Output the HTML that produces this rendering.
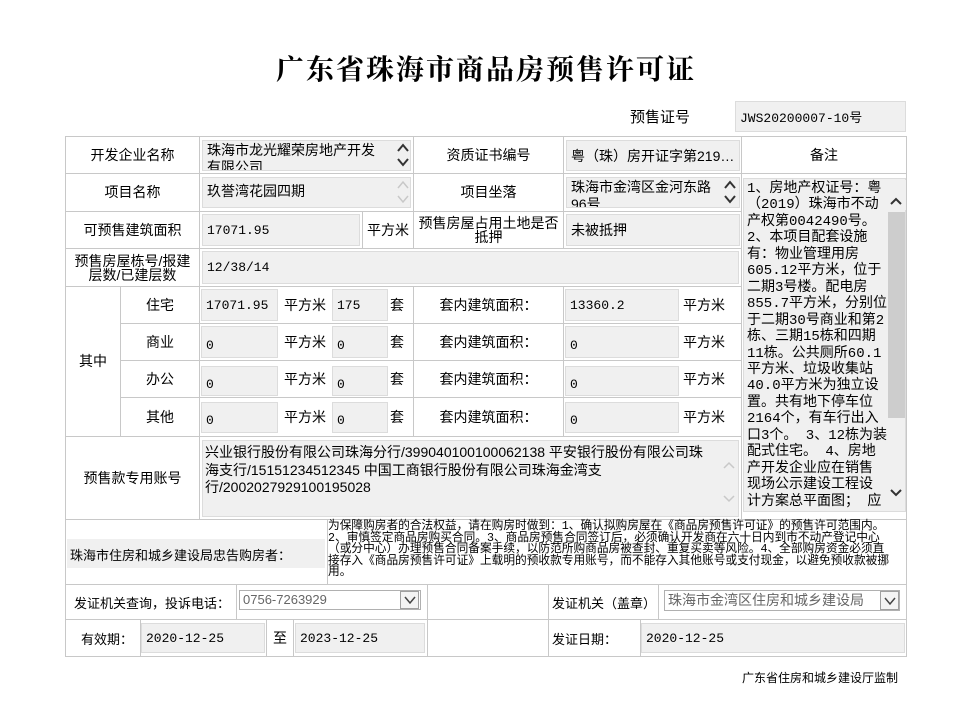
<!DOCTYPE html>
<html><head><meta charset="utf-8">
<style>
*{margin:0;padding:0;box-sizing:border-box}
body{width:957px;height:710px;background:#fff;position:relative;overflow:hidden;font-family:"Liberation Sans","Noto Sans CJK SC",sans-serif;color:#000}
.a{position:absolute}
.c{position:absolute;border:1px solid #c8c8c8;font-size:14px;display:flex;align-items:center;justify-content:center;text-align:center;line-height:15px}
.i{position:absolute;background:#f0f0f0;border:1px solid #dcdcdc;font-family:"Liberation Mono","Noto Sans CJK SC",monospace;font-size:13px;color:#000;display:flex;align-items:center;padding-left:4px;white-space:nowrap;overflow:hidden}
.t{position:absolute;font-size:14px;white-space:nowrap}
svg.s{position:absolute}
</style></head><body>
<div class="a" style="left:0;width:972px;top:48px;text-align:center;font-family:'Noto Serif CJK SC','Liberation Serif',serif;font-weight:bold;font-size:28px;letter-spacing:2px">广东省珠海市商品房预售许可证</div>
<div class="t" style="left:630px;top:106px;font-size:15px">预售证号</div>
<div class="i" style="left:735px;top:101px;width:171px;height:31px">JWS20200007-10号</div>

<div class="c" style="left:65px;top:136px;width:135px;height:38px">开发企业名称</div>
<div class="c" style="left:199px;top:136px;width:215px;height:38px"></div>
<div class="i" style="left:202px;top:140px;width:209px;height:31px;align-items:flex-start;font-family:'Liberation Sans','Noto Sans CJK SC',sans-serif;font-size:14px;line-height:17px;padding-top:1px">珠海市龙光耀荣房地产开发<br>有限公司</div>
<svg class="s" style="left:396px;top:141px" width="14" height="28" viewBox="0 0 14 28"><polyline points="2,10 7,4 12,10" fill="none" stroke="#333" stroke-width="2"/><polyline points="2,18 7,24 12,18" fill="none" stroke="#333" stroke-width="2"/></svg>
<div class="c" style="left:413px;top:136px;width:151px;height:38px">资质证书编号</div>
<div class="c" style="left:563px;top:136px;width:179px;height:38px"></div>
<div class="i" style="left:566px;top:140px;width:174px;height:31px;font-family:'Liberation Sans','Noto Sans CJK SC',sans-serif;font-size:14px">粤（珠）房开证字第219…</div>
<div class="c" style="left:741px;top:136px;width:166px;height:38px">备注</div>

<div class="c" style="left:65px;top:173px;width:135px;height:39px">项目名称</div>
<div class="c" style="left:199px;top:173px;width:215px;height:39px"></div>
<div class="i" style="left:202px;top:177px;width:209px;height:31px;align-items:flex-start;font-family:'Liberation Sans','Noto Sans CJK SC',sans-serif;font-size:14px;padding-top:3px">玖誉湾花园四期</div>
<svg class="s" style="left:396px;top:178px" width="14" height="28" viewBox="0 0 14 28"><polyline points="2,10 7,4 12,10" fill="none" stroke="#c8c8c8" stroke-width="1.5"/><polyline points="2,18 7,24 12,18" fill="none" stroke="#c8c8c8" stroke-width="1.5"/></svg>
<div class="c" style="left:413px;top:173px;width:151px;height:39px">项目坐落</div>
<div class="c" style="left:563px;top:173px;width:179px;height:39px"></div>
<div class="i" style="left:566px;top:177px;width:174px;height:31px;align-items:flex-start;font-family:'Liberation Sans','Noto Sans CJK SC',sans-serif;font-size:14px;line-height:17px;padding-top:1px">珠海市金湾区金河东路<br>96号</div>
<svg class="s" style="left:723px;top:178px" width="14" height="28" viewBox="0 0 14 28"><polyline points="2,10 7,4 12,10" fill="none" stroke="#333" stroke-width="2"/><polyline points="2,18 7,24 12,18" fill="none" stroke="#333" stroke-width="2"/></svg>

<div class="c" style="left:741px;top:173px;width:166px;height:347px"></div>
<div class="i" style="left:743px;top:178px;width:163px;height:334px;align-items:flex-start;font-family:'Liberation Mono','Noto Sans CJK SC',monospace;font-size:14px;line-height:16.45px;padding:2px 0 0 3px;overflow:hidden">1、房地产权证号：粤<br>（2019）珠海市不动<br>产权第0042490号。<br>2、本项目配套设施<br>有：物业管理用房<br>605.12平方米，位于<br>二期3号楼。配电房<br>855.7平方米，分别位<br>于二期30号商业和第2<br>栋、三期15栋和四期<br>11栋。公共厕所60.1<br>平方米、垃圾收集站<br>40.0平方米为独立设<br>置。共有地下停车位<br>2164个，有车行出入<br>口3个。 3、12栋为装<br>配式住宅。 4、房地<br>产开发企业应在销售<br>现场公示建设工程设<br>计方案总平面图； 应</div>
<div class="a" style="left:888px;top:212px;width:17px;height:206px;background:#cdcdcd"></div>
<div class="a" style="left:886px;top:180px;width:20px;height:30px;background:#f0f0f0"></div>
<svg class="s" style="left:889px;top:196px" width="14" height="10" viewBox="0 0 14 10"><polyline points="2,8 7,3 12,8" fill="none" stroke="#333" stroke-width="2"/></svg>
<svg class="s" style="left:889px;top:488px" width="14" height="10" viewBox="0 0 14 10"><polyline points="2,2 7,7 12,2" fill="none" stroke="#333" stroke-width="2"/></svg>

<div class="c" style="left:65px;top:211px;width:135px;height:38px">可预售建筑面积</div>
<div class="c" style="left:199px;top:211px;width:164px;height:38px"></div>
<div class="i" style="left:202px;top:214px;width:158px;height:32px">17071.95</div>
<div class="c" style="left:362px;top:211px;width:52px;height:38px">平方米</div>
<div class="c" style="left:413px;top:211px;width:151px;height:38px;line-height:14px">预售房屋占用土地是否<br>抵押</div>
<div class="c" style="left:563px;top:211px;width:179px;height:38px"></div>
<div class="i" style="left:566px;top:214px;width:174px;height:32px;font-family:'Liberation Sans','Noto Sans CJK SC',sans-serif;font-size:14px">未被抵押</div>

<div class="c" style="left:65px;top:248px;width:135px;height:39px;line-height:14px">预售房屋栋号/报建<br>层数/已建层数</div>
<div class="c" style="left:199px;top:248px;width:543px;height:39px"></div>
<div class="i" style="left:202px;top:251px;width:537px;height:33px">12/38/14</div>

<div class="c" style="left:65px;top:286px;width:56px;height:151px">其中</div>
<div class="c" style="left:120px;top:286px;width:80px;height:38px">住宅</div>
<div class="c" style="left:120px;top:323px;width:80px;height:38px">商业</div>
<div class="c" style="left:120px;top:360px;width:80px;height:38px">办公</div>
<div class="c" style="left:120px;top:397px;width:80px;height:40px">其他</div>

<div class="c" style="left:199px;top:286px;width:215px;height:38px"></div>
<div class="c" style="left:199px;top:323px;width:215px;height:38px"></div>
<div class="c" style="left:199px;top:360px;width:215px;height:38px"></div>
<div class="c" style="left:199px;top:397px;width:215px;height:40px"></div>
<div class="c" style="left:413px;top:286px;width:151px;height:38px">套内建筑面积：</div>
<div class="c" style="left:413px;top:323px;width:151px;height:38px">套内建筑面积：</div>
<div class="c" style="left:413px;top:360px;width:151px;height:38px">套内建筑面积：</div>
<div class="c" style="left:413px;top:397px;width:151px;height:40px">套内建筑面积：</div>
<div class="c" style="left:563px;top:286px;width:179px;height:38px"></div>
<div class="c" style="left:563px;top:323px;width:179px;height:38px"></div>
<div class="c" style="left:563px;top:360px;width:179px;height:38px"></div>
<div class="c" style="left:563px;top:397px;width:179px;height:40px"></div>

<div class="i" style="left:201px;top:289px;width:77px;height:32px">17071.95</div>
<div class="t" style="left:284px;top:295px">平方米</div>
<div class="i" style="left:332px;top:289px;width:56px;height:32px">175</div>
<div class="t" style="left:390px;top:295px">套</div>
<div class="i" style="left:565px;top:289px;width:114px;height:32px">13360.2</div>
<div class="t" style="left:683px;top:295px">平方米</div>

<div class="i" style="left:201px;top:326px;width:77px;height:32px;padding-top:6px">0</div>
<div class="t" style="left:284px;top:332px">平方米</div>
<div class="i" style="left:332px;top:326px;width:56px;height:32px;padding-top:6px">0</div>
<div class="t" style="left:390px;top:332px">套</div>
<div class="i" style="left:565px;top:326px;width:114px;height:32px;padding-top:6px">0</div>
<div class="t" style="left:683px;top:332px">平方米</div>

<div class="i" style="left:201px;top:366px;width:77px;height:30px;padding-top:6px">0</div>
<div class="t" style="left:284px;top:369px">平方米</div>
<div class="i" style="left:332px;top:366px;width:56px;height:30px;padding-top:6px">0</div>
<div class="t" style="left:390px;top:369px">套</div>
<div class="i" style="left:565px;top:366px;width:114px;height:30px;padding-top:6px">0</div>
<div class="t" style="left:683px;top:369px">平方米</div>

<div class="i" style="left:201px;top:402px;width:77px;height:31px;padding-top:6px">0</div>
<div class="t" style="left:284px;top:407px">平方米</div>
<div class="i" style="left:332px;top:402px;width:56px;height:31px;padding-top:6px">0</div>
<div class="t" style="left:390px;top:407px">套</div>
<div class="i" style="left:565px;top:402px;width:114px;height:31px;padding-top:6px">0</div>
<div class="t" style="left:683px;top:407px">平方米</div>

<div class="c" style="left:65px;top:436px;width:135px;height:84px">预售款专用账号</div>
<div class="c" style="left:199px;top:436px;width:543px;height:84px"></div>
<div class="i" style="left:202px;top:440px;width:537px;height:77px;align-items:flex-start;font-family:'Liberation Sans','Noto Sans CJK SC',sans-serif;font-size:14px;line-height:17.5px;padding:3px 0 0 2px">兴业银行股份有限公司珠海分行/399040100100062138 平安银行股份有限公司珠<br>海支行/15151234512345 中国工商银行股份有限公司珠海金湾支<br>行/2002027929100195028</div>
<svg class="s" style="left:722px;top:458px" width="14" height="48" viewBox="0 0 14 48"><polyline points="2,10 7,5 12,10" fill="none" stroke="#c8c8c8" stroke-width="1.5"/><polyline points="2,38 7,43 12,38" fill="none" stroke="#c8c8c8" stroke-width="1.5"/></svg>

<div class="c" style="left:65px;top:519px;width:263px;height:66px"></div>
<div class="a" style="left:67px;top:539px;width:258px;height:29px;background:#f0f0f0"></div>
<div class="t" style="left:70px;top:545px;font-size:13px">珠海市住房和城乡建设局忠告购房者：</div>
<div class="c" style="left:327px;top:519px;width:580px;height:66px"></div>
<div class="a" style="left:328px;top:521px;width:578px;font-size:11.7px;line-height:11.6px;white-space:nowrap;font-family:'Liberation Mono','Noto Sans CJK SC',monospace;z-index:2">为保障购房者的合法权益，请在购房时做到：1、确认拟购房屋在《商品房预售许可证》的预售许可范围内。<br>2、审慎签定商品房购买合同。3、商品房预售合同签订后，必须确认开发商在六十日内到市不动产登记中心<br>（或分中心）办理预售合同备案手续，以防范所购商品房被查封、重复买卖等风险。4、全部购房资金必须直<br>接存入《商品房预售许可证》上载明的预收款专用账号，而不能存入其他账号或支付现金，以避免预收款被挪<br>用。</div>

<div class="c" style="left:65px;top:584px;width:172px;height:36px"></div>
<div class="t" style="left:74px;top:593px;font-size:13px">发证机关查询，投诉电话：</div>
<div class="c" style="left:236px;top:584px;width:192px;height:36px"></div>
<div class="a" style="left:239px;top:590px;width:182px;height:20px;border:1px solid #b0b0b0;font-size:13px;color:#666;padding-left:3px;line-height:18px">0756-7263929</div>
<div class="a" style="left:400px;top:591px;width:19px;height:18px;border:1px solid #a0a0a0;background:#f4f4f4"></div>
<svg class="s" style="left:403px;top:595px" width="14" height="10" viewBox="0 0 14 10"><polyline points="2,2 7,8 12,2" fill="none" stroke="#444" stroke-width="1.5"/></svg>
<div class="c" style="left:427px;top:584px;width:122px;height:36px"></div>
<div class="c" style="left:548px;top:584px;width:111px;height:36px"></div>
<div class="t" style="left:552px;top:593px;font-size:13px">发证机关（盖章）</div>
<div class="c" style="left:658px;top:584px;width:249px;height:36px"></div>
<div class="a" style="left:664px;top:590px;width:236px;height:21px;border:1px solid #b0b0b0;font-size:14px;color:#666;padding-left:3px;line-height:19px">珠海市金湾区住房和城乡建设局</div>
<div class="a" style="left:880px;top:591px;width:19px;height:19px;border:1px solid #a0a0a0;background:#f4f4f4"></div>
<svg class="s" style="left:883px;top:596px" width="14" height="10" viewBox="0 0 14 10"><polyline points="2,2 7,8 12,2" fill="none" stroke="#444" stroke-width="1.5"/></svg>

<div class="c" style="left:65px;top:619px;width:76px;height:38px"></div>
<div class="t" style="left:81px;top:629px;font-size:13px">有效期：</div>
<div class="c" style="left:140px;top:619px;width:127px;height:38px"></div>
<div class="i" style="left:141px;top:623px;width:124px;height:30px">2020-12-25</div>
<div class="c" style="left:266px;top:619px;width:28px;height:38px">至</div>
<div class="c" style="left:293px;top:619px;width:135px;height:38px"></div>
<div class="i" style="left:295px;top:623px;width:130px;height:30px">2023-12-25</div>
<div class="c" style="left:427px;top:619px;width:122px;height:38px"></div>
<div class="c" style="left:548px;top:619px;width:93px;height:38px"></div>
<div class="t" style="left:552px;top:629px;font-size:13px">发证日期：</div>
<div class="c" style="left:640px;top:619px;width:267px;height:38px"></div>
<div class="i" style="left:641px;top:623px;width:264px;height:30px">2020-12-25</div>

<div class="t" style="left:742px;top:669px;font-size:12px">广东省住房和城乡建设厅监制</div>
</body></html>
